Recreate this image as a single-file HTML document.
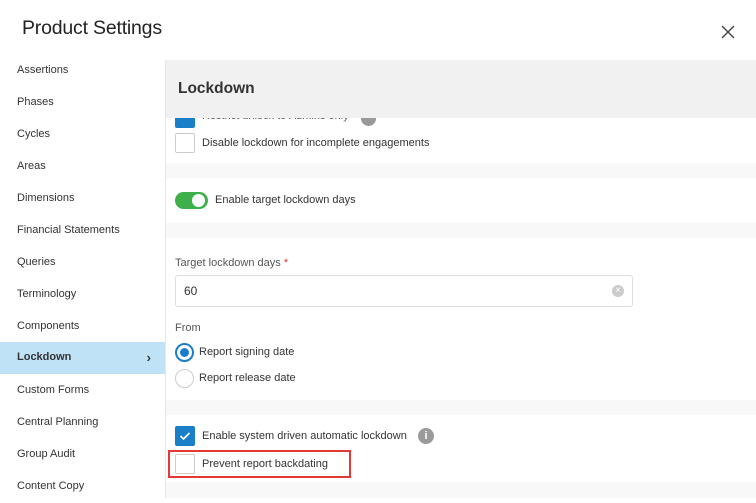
<!DOCTYPE html>
<html><head><style>
*{box-sizing:border-box;margin:0;padding:0}
body{width:756px;height:498px;overflow:hidden;background:#fff;font-family:"Liberation Sans",sans-serif;color:#333;position:relative}
.abs{position:absolute}
.title{left:22px;top:17px;font-size:19.5px;color:#222;letter-spacing:-0.2px}
.side div{position:absolute;left:0;width:165px;height:32px;font-size:11px;color:#333;padding-left:17px;line-height:34px}
.sep{left:165px;top:60px;width:1px;height:438px;background:#e6e6e6}
.hdr{left:166px;top:60px;width:590px;height:58px;background:#f1f1f1}
.hdr span{position:absolute;left:12px;top:20px;font-size:15.5px;font-weight:bold;color:#333}
.gap{left:166px;width:590px;background:#f8f8f8}
.t{font-size:11px;color:#333;position:absolute}
.cb{position:absolute;width:20px;height:20px;border:1px solid #ccc;border-radius:2px;background:#fff}
.cbc{background:#1a7fc8;border-color:#1a7fc8}
</style></head><body>
<div class="abs title">Product Settings</div>
<svg class="abs" style="left:721px;top:25px" width="14" height="14"><path d="M1 1L13 13M13 1L1 13" stroke="#444" stroke-width="1.4"/></svg>
<div class="side">
<div style="top:53px">Assertions</div>
<div style="top:85px">Phases</div>
<div style="top:117px">Cycles</div>
<div style="top:149px">Areas</div>
<div style="top:181px">Dimensions</div>
<div style="top:213px">Financial Statements</div>
<div style="top:245px">Queries</div>
<div style="top:277px">Terminology</div>
<div style="top:309px">Components</div>
<div style="top:342px;background:#bfe2f7;font-weight:bold;line-height:31px">Lockdown<span style="position:absolute;right:14px;font-size:13px">›</span></div>
<div style="top:373px">Custom Forms</div>
<div style="top:405px">Central Planning</div>
<div style="top:437px">Group Audit</div>
<div style="top:469px">Content Copy</div>
</div>
<div class="abs sep"></div>
<div class="abs hdr"><span>Lockdown</span></div>
<div class="abs gap" style="top:163px;height:15px"></div>
<div class="abs gap" style="top:223px;height:15px"></div>
<div class="abs gap" style="top:400px;height:15px"></div>
<div class="abs gap" style="top:482px;height:16px"></div>
<!-- card1 -->
<div class="abs" style="left:166px;top:118px;width:590px;height:10px;overflow:hidden">
<div class="cb cbc" style="left:9px;top:-10px"></div>
<span class="t" style="left:36px;top:-8px;color:#555">Restrict unlock to Admins only</span>
<div class="abs" style="left:195px;top:-7px;width:15px;height:15px;border-radius:8px;background:#999"></div>
</div>
<div class="cb" style="left:175px;top:133px"></div>
<span class="t" style="left:202px;top:137px">Disable lockdown for incomplete engagements</span>
<!-- card2 -->
<div class="abs" style="left:175px;top:192px;width:33px;height:17px;border-radius:9px;background:#3eb049"></div>
<div class="abs" style="left:192px;top:194px;width:13px;height:13px;border-radius:7px;background:#fff"></div>
<span class="t" style="left:215px;top:194px">Enable target lockdown days</span>
<!-- card3 -->
<span class="t" style="left:175px;top:257px;font-size:11px;color:#555">Target lockdown days <span style="color:#d33">*</span></span>
<div class="abs" style="left:175px;top:275px;width:458px;height:32px;border:1px solid #ddd;border-radius:3px"></div>
<span class="t" style="left:184px;top:284px;font-size:12px">60</span>
<div class="abs" style="left:612px;top:285px;width:12px;height:12px;border-radius:6px;background:#ccc;color:#fff;font-size:10px;line-height:12px;text-align:center">×</div>
<span class="t" style="left:175px;top:322px;color:#555">From</span>
<div class="abs" style="left:175px;top:343px;width:19px;height:19px;border-radius:10px;border:2px solid #1a7fc8"></div>
<div class="abs" style="left:180px;top:348px;width:9px;height:9px;border-radius:5px;background:#1a7fc8"></div>
<span class="t" style="left:199px;top:346px">Report signing date</span>
<div class="abs" style="left:175px;top:369px;width:19px;height:19px;border-radius:10px;border:1px solid #ccc"></div>
<span class="t" style="left:199px;top:372px">Report release date</span>
<!-- card4 -->
<div class="cb cbc" style="left:175px;top:426px"></div>
<svg class="abs" style="left:179px;top:431px" width="12" height="10"><path d="M1.5 5L4.5 8L10.5 2" stroke="#fff" stroke-width="1.6" fill="none"/></svg>
<span class="t" style="left:202px;top:430px">Enable system driven automatic lockdown</span>
<div class="abs" style="left:418px;top:428px;width:16px;height:16px;border-radius:8px;background:#9a9a9a;color:#fff;font-size:11px;font-weight:bold;line-height:16px;text-align:center">i</div>
<div class="abs" style="left:168px;top:450px;width:183px;height:28px;border:2px solid #e53935"></div>
<div class="cb" style="left:175px;top:454px"></div>
<span class="t" style="left:202px;top:458px">Prevent report backdating</span>
</body></html>
